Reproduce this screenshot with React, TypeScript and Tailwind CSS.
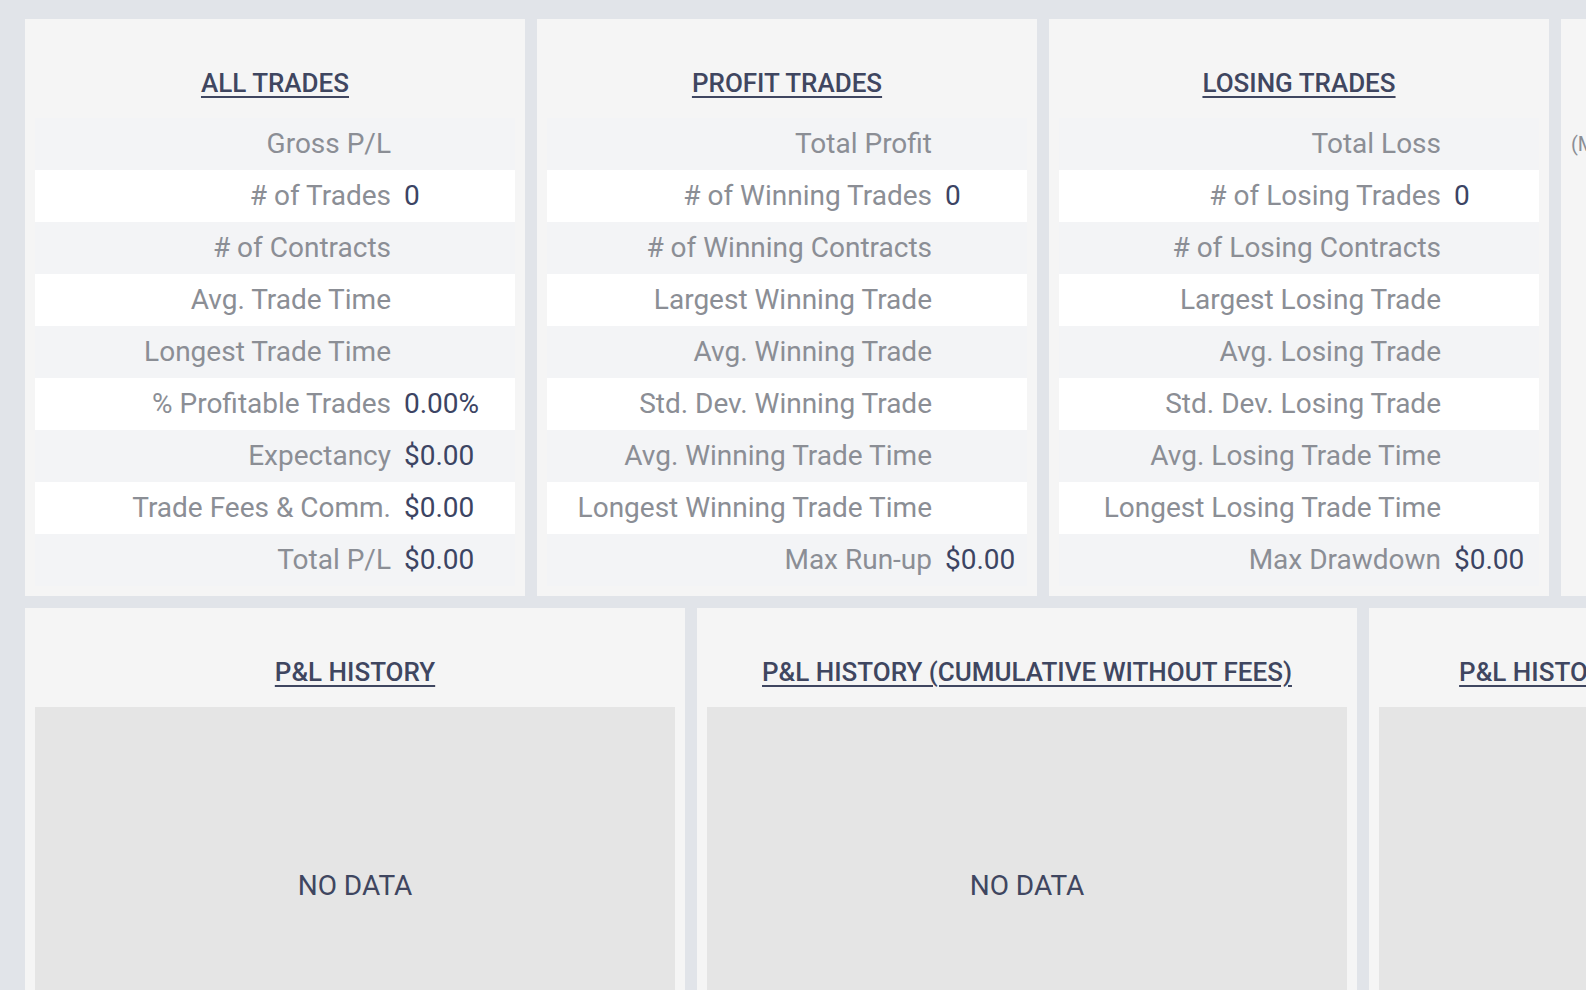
import React from "react";

type Stat = { label: string; value?: string };

type StatCard = { title: string; labelWidth: string; stats: Stat[] };

const statCards: StatCard[] = [
	{
		title: "ALL TRADES",
		labelWidth: "w-[356px]",
		stats: [
			{ label: "Gross P/L" },
			{ label: "# of Trades", value: "0" },
			{ label: "# of Contracts" },
			{ label: "Avg. Trade Time" },
			{ label: "Longest Trade Time" },
			{ label: "% Profitable Trades", value: "0.00%" },
			{ label: "Expectancy", value: "$0.00" },
			{ label: "Trade Fees & Comm.", value: "$0.00" },
			{ label: "Total P/L", value: "$0.00" },
		],
	},
	{
		title: "PROFIT TRADES",
		labelWidth: "w-[385px]",
		stats: [
			{ label: "Total Profit" },
			{ label: "# of Winning Trades", value: "0" },
			{ label: "# of Winning Contracts" },
			{ label: "Largest Winning Trade" },
			{ label: "Avg. Winning Trade" },
			{ label: "Std. Dev. Winning Trade" },
			{ label: "Avg. Winning Trade Time" },
			{ label: "Longest Winning Trade Time" },
			{ label: "Max Run-up", value: "$0.00" },
		],
	},
	{
		title: "LOSING TRADES",
		labelWidth: "w-[382px]",
		stats: [
			{ label: "Total Loss" },
			{ label: "# of Losing Trades", value: "0" },
			{ label: "# of Losing Contracts" },
			{ label: "Largest Losing Trade" },
			{ label: "Avg. Losing Trade" },
			{ label: "Std. Dev. Losing Trade" },
			{ label: "Avg. Losing Trade Time" },
			{ label: "Longest Losing Trade Time" },
			{ label: "Max Drawdown", value: "$0.00" },
		],
	},
];

const charts = [
	"P&L HISTORY",
	"P&L HISTORY (CUMULATIVE WITHOUT FEES)",
	"P&L HISTORY (CUMULATIVE WITH FEES)",
];

const CardTitle = ({ children }: { children: React.ReactNode }) => (
	<div className="pt-[40px] pb-[21px] text-center text-[26px] leading-[28px] font-medium text-[#3f4660]">
		<span className="underline decoration-[2px] underline-offset-[4px]">
			{children}
		</span>
	</div>
);

const StatsCard = ({ title, labelWidth, stats }: StatCard) => (
	<div className="w-[500px] shrink-0 bg-[#f5f5f5] p-[10px]">
		<CardTitle>{title}</CardTitle>
		<div>
			{stats.map((s, i) => (
				<div
					key={s.label}
					className={`flex h-[52px] items-center text-[28px] ${
						i % 2 === 0 ? "bg-[#f3f4f6]" : "bg-white"
					}`}
				>
					<span className={`${labelWidth} shrink-0 text-right text-[#8b8e95]`}>
						{s.label}
					</span>
					{s.value && <span className="pl-[13px] text-[#3c4463]">{s.value}</span>}
				</div>
			))}
		</div>
	</div>
);

const ChartCard = ({ title }: { title: string }) => (
	<div className="w-[660px] shrink-0 bg-[#f5f5f5] px-[10px] pt-[10px]">
		<CardTitle>{title}</CardTitle>
		<div className="flex h-[358px] items-center justify-center bg-[#e5e5e5] text-[28px] text-[#3f4660]">
			NO DATA
		</div>
	</div>
);

export default function App() {
	return (
		<div className="h-[990px] w-[1586px] overflow-hidden bg-[#e1e4e9] pl-[25px] pt-[19px] font-['Roboto',sans-serif]">
			<div className="flex gap-3">
				{statCards.map((c) => (
					<StatsCard key={c.title} {...c} />
				))}
				<div className="w-[500px] shrink-0 bg-[#f5f5f5] p-[10px]">
					<CardTitle>TRADE EFFICIENCY</CardTitle>
					<div className="flex h-[52px] items-center text-[20px] text-[#8b8e95]">
						(MAE / MFE)
					</div>
				</div>
			</div>
			<div className="mt-3 flex gap-3">
				{charts.map((t) => (
					<ChartCard key={t} title={t} />
				))}
			</div>
		</div>
	);
}
